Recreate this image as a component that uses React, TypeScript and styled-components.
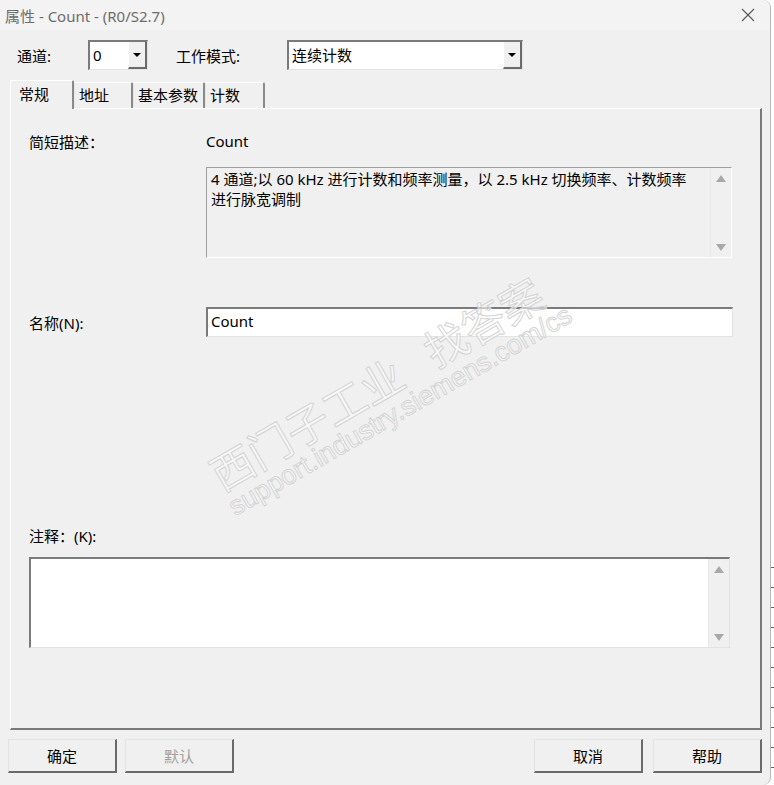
import React from 'react';
import styled, { createGlobalStyle } from 'styled-components';

const GlobalStyle = createGlobalStyle`
  html, body {
    margin: 0;
    padding: 0;
  }
  html {
    background:
      linear-gradient(#ffffff, #ffffff) top left / 100% 545px no-repeat,
      repeating-linear-gradient(to bottom, #ffffff 0 19px, #6a6a6a 19px 20px) 0 548px;
  }
  body {
    font-family: "Noto Sans", "Noto Sans CJK SC", sans-serif;
    font-size: 15px;
    color: #000;
  }
`;

const Window = styled.div`
  position: relative;
  width: 771px;
  height: 785px;
  box-sizing: border-box;
  background: #f0f0f0;
  border-right: 1px solid #b8b8b8;
  border-top-right-radius: 8px;
  border-bottom-right-radius: 8px;
  display: flex;
  flex-direction: column;
  overflow: hidden;
`;

const TitleBar = styled.div`
  height: 30px;
  flex: none;
  display: flex;
  align-items: center;
  justify-content: space-between;
  padding: 0 14px 0 5px;
  background: #f3f3f3;
  color: #6d6d6d;
  font-size: 15px;
`;

const Close = styled.span`
  display: flex;
  width: 16px;
  height: 16px;
`;

const Body = styled.div`
  flex: 1;
  display: flex;
  flex-direction: column;
  padding: 10px 8px 12px 10px;
`;

const TopRow = styled.div`
  display: flex;
  align-items: center;
  height: 30px;
  padding-left: 7px;
`;

const TopLabel = styled.span<{ $w: number }>`
  width: ${p => p.$w}px;
  flex: none;
`;

const Combo = styled.div<{ $w: number }>`
  width: ${p => p.$w}px;
  height: 30px;
  box-sizing: border-box;
  flex: none;
  display: flex;
  background: #fff;
  border-top: 2px solid #7a7a7a;
  border-left: 2px solid #7a7a7a;
  border-right: 1px solid #e3e3e3;
  border-bottom: 1px solid #e3e3e3;
  margin-right: 28px;
`;

const ComboText = styled.span`
  flex: 1;
  padding-left: 3px;
  line-height: 27px;
`;

const ComboButton = styled.span`
  width: 19px;
  flex: none;
  box-sizing: border-box;
  background: #f0f0f0;
  border-left: 1px solid #ffffff;
  border-right: 2px solid #6a6a6a;
  border-bottom: 2px solid #6a6a6a;
  display: flex;
  align-items: center;
  justify-content: center;
  &::after {
    content: '';
    border-left: 4px solid transparent;
    border-right: 4px solid transparent;
    border-top: 4px solid #000;
  }
`;

const Tabs = styled.div`
  display: flex;
  align-items: flex-end;
  margin-top: 10px;
  height: 28px;
  position: relative;
  z-index: 1;
`;

const Tab = styled.div<{ $w: number; $active?: boolean }>`
  width: ${p => p.$w}px;
  height: ${p => (p.$active ? 29 : 26)}px;
  box-sizing: border-box;
  flex: none;
  background: #f0f0f0;
  border-top: 1px solid #ffffff;
  border-left: 1px solid ${p => (p.$active ? '#ffffff' : '#e6e6e6')};
  border-right: 2px solid #8a8a8a;
  border-top-left-radius: 2px;
  border-top-right-radius: 2px;
  padding-left: ${p => (p.$active ? 8 : 4)}px;
  line-height: ${p => (p.$active ? 26 : 24)}px;
  margin-bottom: ${p => (p.$active ? -1 : 0)}px;
  white-space: nowrap;
`;

const Panel = styled.div`
  flex: 1;
  position: relative;
  box-sizing: border-box;
  border-top: 1px solid #ffffff;
  border-left: 1px solid #ffffff;
  border-right: 2px solid #7a7a7a;
  border-bottom: 2px solid #7a7a7a;
  padding: 22px 28px 0 18px;
  display: flex;
  flex-direction: column;
`;

const Row = styled.div<{ $h: number; $mt?: number }>`
  display: flex;
  align-items: center;
  height: ${p => p.$h}px;
  margin-top: ${p => p.$mt ?? 0}px;
`;

const Label = styled.span`
  width: 177px;
  flex: none;
`;

const DescBox = styled.div`
  margin: 16px 0 0 177px;
  height: 91px;
  box-sizing: border-box;
  display: flex;
  border-top: 1px solid #a0a0a0;
  border-left: 1px solid #a0a0a0;
  border-right: 1px solid #ffffff;
  border-bottom: 1px solid #ffffff;
  background: #f0f0f0;
`;

const DescText = styled.div`
  flex: 1;
  padding: 1px 3px 0 4px;
  line-height: 20px;
  white-space: nowrap;
  overflow: hidden;
`;

const Scroll = styled.div<{ $bg: string }>`
  width: 21px;
  flex: none;
  background: ${p => p.$bg};
  border-left: 1px solid #e8e8e8;
  display: flex;
  flex-direction: column;
  justify-content: space-between;
  align-items: center;
  padding: 7px 0 6px;
  box-sizing: border-box;
`;

const Arrow = styled.span<{ $down?: boolean }>`
  width: 0;
  height: 0;
  border-left: 5px solid transparent;
  border-right: 5px solid transparent;
  ${p =>
    p.$down
      ? 'border-top: 7px solid #a8a8a8;'
      : 'border-bottom: 7px solid #a8a8a8;'}
`;

const NameInput = styled.div`
  flex: 1;
  height: 30px;
  box-sizing: border-box;
  background: #fff;
  border-top: 2px solid #7a7a7a;
  border-left: 2px solid #7a7a7a;
  border-right: 1px solid #e3e3e3;
  border-bottom: 1px solid #e3e3e3;
  padding-left: 3px;
  line-height: 25px;
  margin-right: -1px;
`;

const CommentBox = styled.div`
  margin: 12px 2px 0 0;
  height: 91px;
  box-sizing: border-box;
  display: flex;
  background: #fff;
  border-top: 2px solid #7a7a7a;
  border-left: 2px solid #7a7a7a;
  border-right: 1px solid #e3e3e3;
  border-bottom: 1px solid #e3e3e3;
`;

const CommentArea = styled.div`
  flex: 1;
`;

const Watermark = styled.div`
  position: absolute;
  left: 142px;
  top: 249px;
  width: 460px;
  transform: rotate(-30deg);
  text-align: center;
  pointer-events: none;
  color: rgba(255, 255, 255, 0.55);
  -webkit-text-stroke: 1px #d4d4d4;
`;

const MarkCn = styled.div`
  font-family: "Noto Sans CJK SC", sans-serif;
  font-size: 43px;
  line-height: 44px;
  word-spacing: 22px;
  white-space: nowrap;
`;

const MarkUrl = styled.div`
  font-family: "Liberation Sans", Arial, sans-serif;
  font-size: 27px;
  line-height: 30px;
  padding-left: 14px;
  white-space: nowrap;
`;

const Spacer = styled.div`
  flex: 1;
`;

const Buttons = styled.div`
  display: flex;
  margin-top: 9px;
  margin-left: -2px;
  gap: 8px;
`;

const Button = styled.div<{ $disabled?: boolean; $ml?: number }>`
  width: 109px;
  height: 34px;
  box-sizing: border-box;
  flex: none;
  display: flex;
  align-items: center;
  justify-content: center;
  background: #f0f0f0;
  border-top: 1px solid #e3e3e3;
  border-left: 1px solid #e3e3e3;
  border-right: 2px solid #6a6a6a;
  border-bottom: 2px solid #6a6a6a;
  color: ${p => (p.$disabled ? '#a0a0a0' : '#000')};
  margin-left: ${p => p.$ml ?? 0}px;
`;

export default function App() {
  return (
    <>
      <GlobalStyle />
      <Window>
        <TitleBar>
          <span>属性 - Count - (R0/S2.7)</span>
          <Close>
            <svg width="16" height="16" viewBox="0 0 16 16">
              <path d="M2 2 L14 14 M14 2 L2 14" stroke="#555" strokeWidth="1.1" />
            </svg>
          </Close>
        </TitleBar>
        <Body>
          <TopRow>
            <TopLabel $w={71}>通道:</TopLabel>
            <Combo $w={60}>
              <ComboText>0</ComboText>
              <ComboButton />
            </Combo>
            <TopLabel $w={111}>工作模式:</TopLabel>
            <Combo $w={236}>
              <ComboText>连续计数</ComboText>
              <ComboButton />
            </Combo>
          </TopRow>

          <Tabs>
            <Tab $w={64} $active>常规</Tab>
            <Tab $w={59}>地址</Tab>
            <Tab $w={72}>基本参数</Tab>
            <Tab $w={60}>计数</Tab>
          </Tabs>

          <Panel>
            <Row $h={20}>
              <Label>简短描述：</Label>
              <span>Count</span>
            </Row>
            <DescBox>
              <DescText>
                4 通道;以 60 kHz 进行计数和频率测量，以 2.5 kHz 切换频率、计数频率
                <br />
                进行脉宽调制
              </DescText>
              <Scroll $bg="#f0f0f0">
                <Arrow />
                <Arrow $down />
              </Scroll>
            </DescBox>

            <Row $h={30} $mt={49}>
              <Label>名称(N):</Label>
              <NameInput>Count</NameInput>
            </Row>

            <Row $h={20} $mt={188}>
              <Label>注释：(K):</Label>
            </Row>
            <CommentBox>
              <CommentArea />
              <Scroll $bg="#f0f0f0">
                <Arrow />
                <Arrow $down />
              </Scroll>
            </CommentBox>

            <Watermark>
              <MarkCn>西门子工业 找答案</MarkCn>
              <MarkUrl>support.industry.siemens.com/cs</MarkUrl>
            </Watermark>
          </Panel>

          <Buttons>
            <Button>确定</Button>
            <Button $disabled>默认</Button>
            <Spacer />
            <Button>取消</Button>
            <Button $ml={2}>帮助</Button>
          </Buttons>
        </Body>
      </Window>
    </>
  );
}
